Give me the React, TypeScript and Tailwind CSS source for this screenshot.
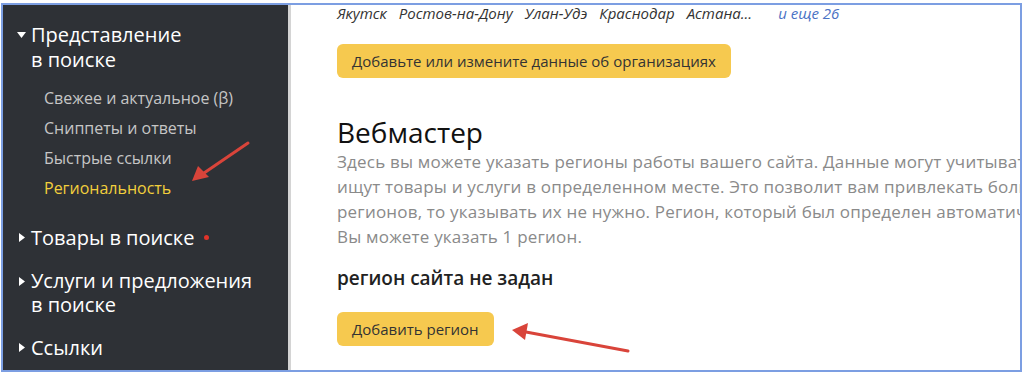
import React from "react";

const font = { fontFamily: '"Open Sans", "Noto Sans", sans-serif' };

function Tri({ open }: { open?: boolean }) {
  return open ? (
    <svg width="9" height="6" viewBox="0 0 9 6" className="shrink-0">
      <path d="M0 0 H9 L4.5 6 Z" fill="#fff" />
    </svg>
  ) : (
    <svg width="6" height="9" viewBox="0 0 6 9" className="shrink-0">
      <path d="M0 0 V9 L6 4.5 Z" fill="#fff" />
    </svg>
  );
}

export default function App() {
  return (
    <div className="relative w-[1025px] h-[376px] bg-white overflow-hidden" style={font}>
      <div className="ml-[1px] mt-[3px] w-[1021px] h-[369px] border-2 border-[#7c9ee2] flex overflow-hidden">
        {/* Sidebar */}
        <div className="w-[285px] shrink-0 bg-[#2e3136] text-white pl-[14px] pt-[17px]">
          <div className="flex items-start gap-[5px]">
            <div className="mt-[10px]"><Tri open /></div>
            <div className="text-[20px] leading-[25px]">Представление<br />в поиске</div>
          </div>
          <div className="pl-[27px] mt-[11px] flex flex-col text-[16px] leading-[30px] text-[#c6c6c6]">
            <div>Свежее и актуальное (β)</div>
            <div>Сниппеты и ответы</div>
            <div>Быстрые ссылки</div>
            <div className="text-[#f2cf3c]">Региональность</div>
          </div>
          <div className="flex items-center gap-[6px] mt-[22px] pl-[2px]">
            <Tri />
            <div className="text-[20px] leading-[25px]">Товары в поиске</div>
            <div className="w-[5px] h-[5px] rounded-full bg-[#e0332a] ml-[4px]" />
          </div>
          <div className="flex items-start gap-[6px] mt-[19px] pl-[2px]">
            <div className="mt-[8px]"><Tri /></div>
            <div className="text-[20px] leading-[24px]">Услуги и предложения<br />в поиске</div>
          </div>
          <div className="flex items-center gap-[6px] mt-[18px] pl-[2px]">
            <Tri />
            <div className="text-[20px] leading-[25px]">Ссылки</div>
          </div>
        </div>
        <div className="w-[3px] shrink-0 bg-[#d4d4d4]" />
        {/* Content */}
        <div className="flex-1 min-w-0 pl-[46px] overflow-hidden whitespace-nowrap">
          <div className="-mt-[1px] text-[15px] leading-[18px] italic text-[#333] flex gap-[12px]">
            <span>Якутск</span><span>Ростов-на-Дону</span><span>Улан-Удэ</span><span>Краснодар</span><span>Астана...</span>
            <span className="text-[#4a72c4] ml-[14px]">и еще 26</span>
          </div>
          <div className="mt-[22px]">
            <span className="inline-block bg-[#f6c94f] rounded-[6px] px-[15px] h-[34px] leading-[34px] text-[15px] text-[#333]">
              Добавьте или измените данные об организациях
            </span>
          </div>
          <div className="mt-[38px] text-[28px] leading-[32px] text-[#111] font-medium">Вебмастер</div>
          <div className="mt-[1px] text-[17px] leading-[25px] tracking-[0.2px] text-[#8a8a8a]">
            <div>Здесь вы можете указать регионы работы вашего сайта. Данные могут учитываться, если пользователи</div>
            <div>ищут товары и услуги в определенном месте. Это позволит вам привлекать больше посетителей из</div>
            <div>регионов, то указывать их не нужно. Регион, который был определен автоматически, будет показан</div>
            <div>Вы можете указать 1 регион.</div>
          </div>
          <div className="mt-[17px] text-[19px] leading-[24px] font-semibold text-[#222]">регион сайта не задан</div>
          <div className="mt-[22px]">
            <span className="inline-block bg-[#f6c94f] rounded-[6px] px-[15px] h-[34px] leading-[34px] text-[15px] text-[#333]">
              Добавить регион
            </span>
          </div>
        </div>
      </div>
      {/* Arrows */}
      <svg className="absolute inset-0 pointer-events-none" width="1025" height="376">
        <line x1="248" y1="143" x2="204" y2="173" stroke="#d9443a" strokeWidth="3" strokeLinecap="round" />
        <path d="M192 181 L198 166 L209 177 Z" fill="#d9443a" />
        <line x1="628" y1="351" x2="526" y2="332" stroke="#d9443a" strokeWidth="3" strokeLinecap="round" />
        <path d="M512 330 L528 323 L525 340 Z" fill="#d9443a" />
      </svg>
    </div>
  );
}
